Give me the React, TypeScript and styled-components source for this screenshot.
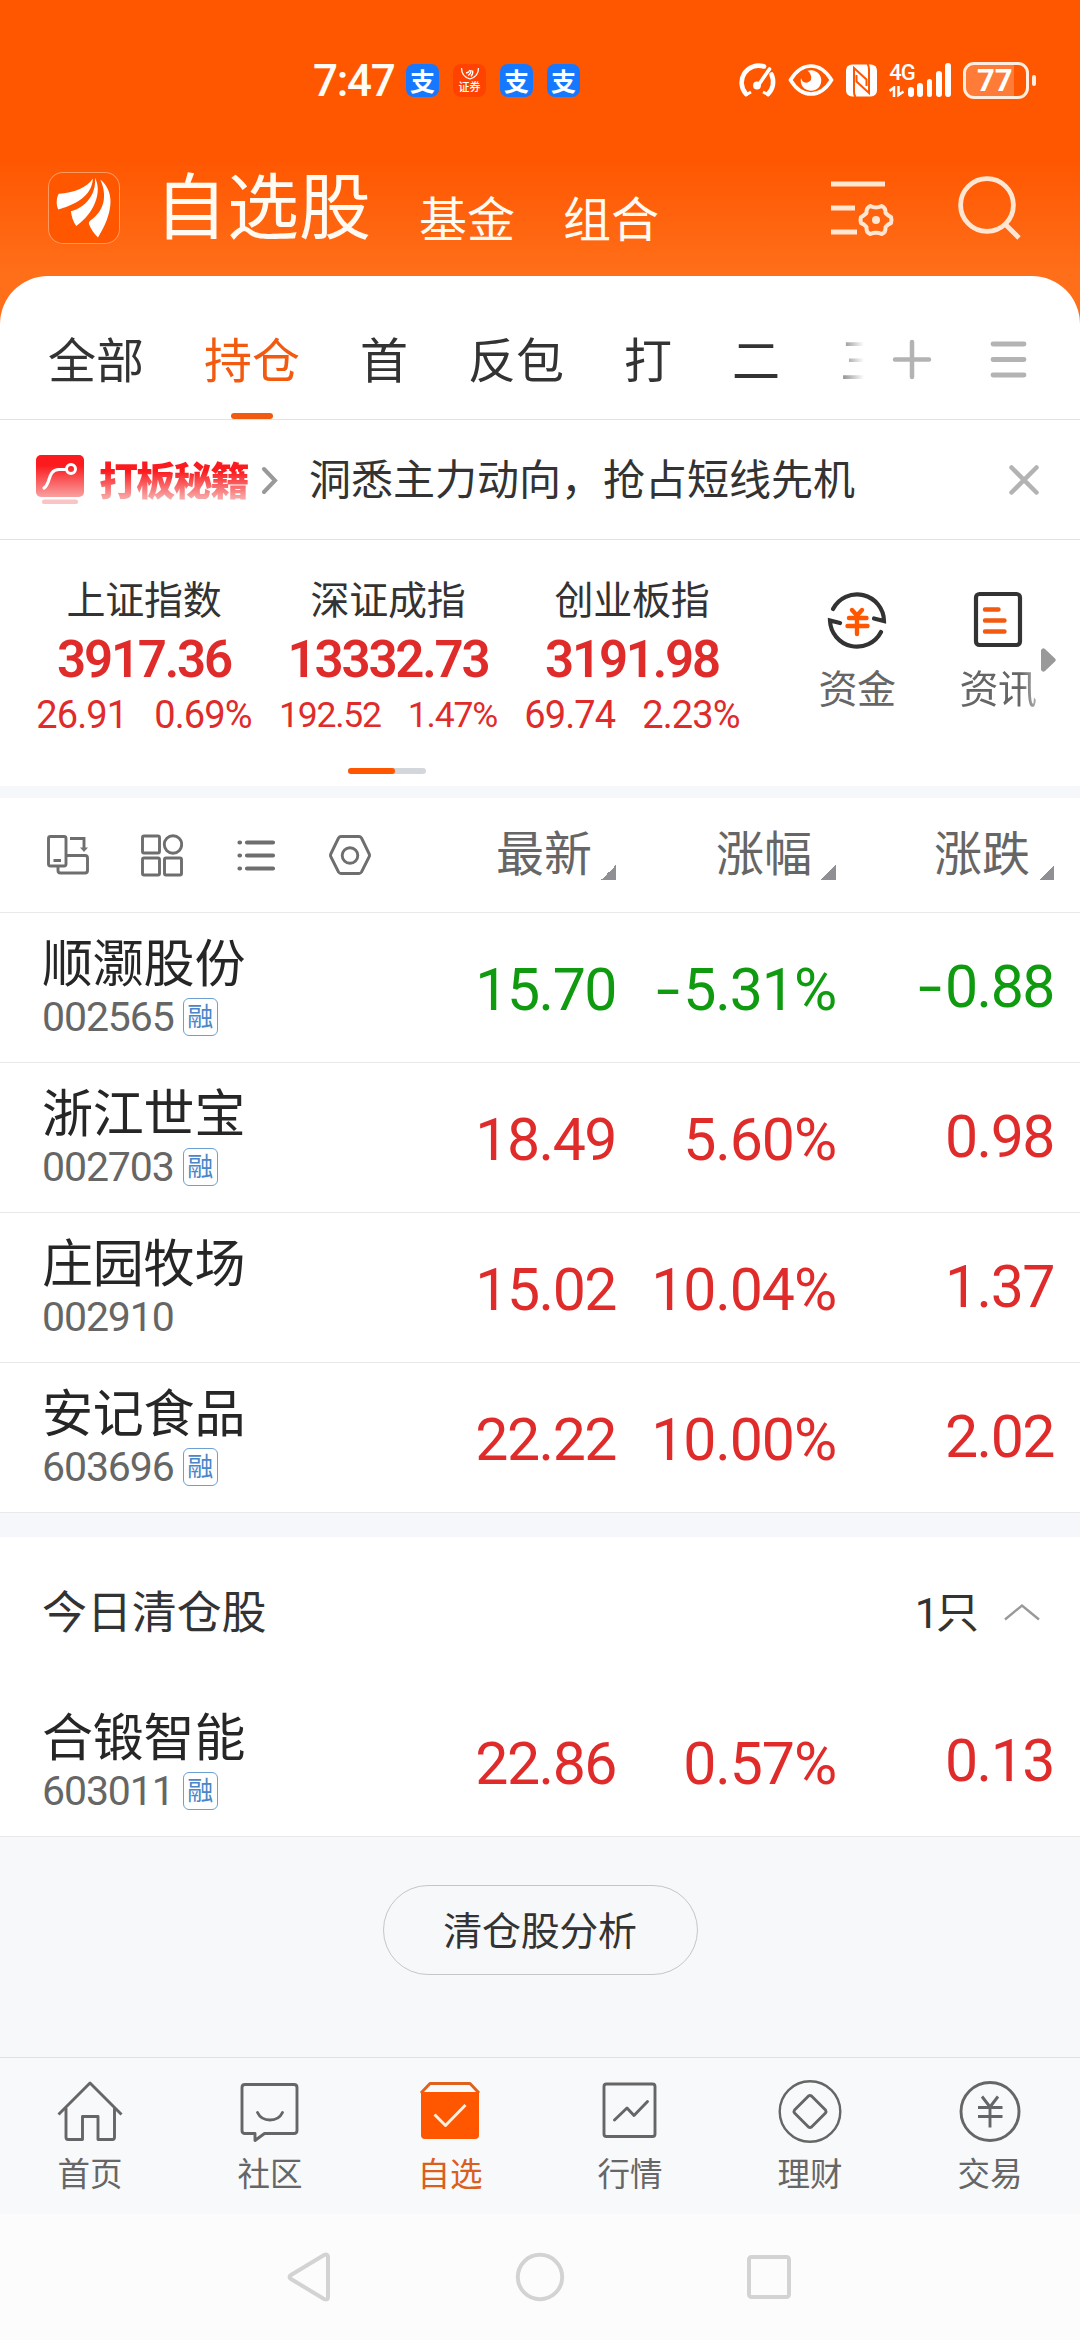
import React from 'react';
import styled, { createGlobalStyle } from 'styled-components';

const CJK = `"Noto Sans CJK SC", "Noto Sans", sans-serif`;
const NUM = `Roboto, "Noto Sans CJK SC", sans-serif`;
const RED = '#e02b2b';
const GREEN = '#0f9a0f';
const ORANGE = '#ff5600';

const GlobalStyle = createGlobalStyle`
  * { box-sizing: border-box; }
  html, body { margin: 0; padding: 0; background: #fcfcfc; }
  body { font-family: ${CJK}; color: #333; }
  svg { display: block; flex: none; }
`;

const Screen = styled.div`
  width: 1080px;
  height: 2340px;
  display: flex;
  flex-direction: column;
  overflow: hidden;
  background: #f7f8fa;
`;

/* ---------- status bar + header ---------- */

const Top = styled.div`
  flex: none;
  height: 324px;
  margin-bottom: -48px;
  background: linear-gradient(180deg, #ff5600 0, #ff5600 155px, #ff6f1a 276px, #ff6f1a 324px);
`;

const StatusBar = styled.div`
  height: 160px;
  padding: 0 44px 0 313px;
  display: flex;
  align-items: center;
  justify-content: space-between;
`;

const StatusGroup = styled.div`
  display: flex;
  align-items: center;
`;

const Clock = styled.span`
  width: 93px;
  padding-top: 2px;
  font: 500 44px/48px ${NUM};
  letter-spacing: -1.3px;
  color: #fffbf5;
  white-space: nowrap;
`;

const AppBadge = styled.span<{ $bg: string }>`
  width: 33px;
  height: 33px;
  margin-right: 14px;
  border-radius: 8px;
  background: ${(p) => p.$bg};
  color: #fff;
  font: 700 25px/28px ${CJK};
  display: flex;
  flex-direction: column;
  align-items: center;
  justify-content: center;
`;

const BadgeCaption = styled.span`
  font: 500 11px/13px ${CJK};
  white-space: nowrap;
`;

const SignalColumn = styled.div`
  width: 19px;
  height: 33px;
  margin-left: 12px;
  display: flex;
  flex-direction: column;
  justify-content: space-between;
`;

const SignalType = styled.span`
  font: 500 22px/17px ${NUM};
  letter-spacing: -1px;
  color: #fff;
`;

const SignalBars = styled.div`
  display: flex;
  align-items: flex-end;
  gap: 3.6px;
  height: 34px;
`;

const SignalBar = styled.span<{ $h: number }>`
  width: 5.7px;
  height: ${(p) => p.$h}px;
  border-radius: 3px;
  background: #fff;
`;

const Battery = styled.div`
  width: 66px;
  height: 37px;
  margin-left: 12px;
  border: 3px solid #ffeee0;
  border-radius: 11px;
  background: linear-gradient(90deg, rgba(255, 255, 255, 0.22) 48px, transparent 48px);
  font: 700 31px/31px ${NUM};
  color: #fff;
  padding-left: 11px;
`;

const BatteryNub = styled.span`
  width: 4px;
  height: 11px;
  margin-left: 3px;
  border-radius: 2px;
  background: #ffeee0;
`;

const Header = styled.div`
  height: 116px;
  padding: 0 58px 0 48px;
  display: flex;
  align-items: flex-start;
  color: #fffaf2;
`;

const Logo = styled.div`
  width: 72px;
  height: 72px;
  margin-top: 12px;
  border: 1.5px solid rgba(255, 200, 160, 0.6);
  border-radius: 15px;
  background: #ff5600;
`;

const Title = styled.h1`
  margin: 6px 0 0 35px;
  font: 400 72px/72px ${CJK};
`;

const HeaderLink = styled.span`
  margin: 32px 0 0 48px;
  font: 400 48px/48px ${CJK};
`;

const HeaderActions = styled.div`
  margin: 15px 0 0 auto;
  display: flex;
  gap: 63px;
`;

/* ---------- group tabs ---------- */

const Sheet = styled.div`
  flex: none;
  background: #fff;
  border-radius: 48px 48px 0 0;
`;

const TabBar = styled.div`
  height: 144px;
  border-bottom: 1px solid #e2e2e2;
  display: flex;
  align-items: stretch;
`;

const TabScroller = styled.div`
  width: 866px;
  padding-left: 48px;
  display: flex;
  gap: 60px;
  overflow: hidden;
  mask-image: linear-gradient(90deg, #000 790px, rgba(0, 0, 0, 0.55) 842px, transparent 864px);
`;

const Tab = styled.div<{ $active?: boolean }>`
  flex: none;
  display: flex;
  flex-direction: column;
  align-items: center;
  justify-content: space-between;
  padding-top: 57px;
  font: 400 48px/48px ${CJK};
  color: ${(p) => (p.$active ? '#f25a10' : '#333')};
  &::after {
    content: '';
    width: 42px;
    height: 6px;
    border-radius: 3px;
    background: ${(p) => (p.$active ? '#f25a10' : 'transparent')};
  }
`;

const TabActions = styled.div`
  flex: 1;
  display: flex;
  align-items: flex-start;
  padding: 62px 0 0 26px;
  gap: 56px;
`;

/* ---------- promo banner ---------- */

const Banner = styled.div`
  height: 120px;
  padding: 0 40px 0 36px;
  border-bottom: 1px solid #e2e2e2;
  display: flex;
  align-items: center;
`;

const BannerTag = styled.span`
  width: 150px;
  margin: -4px 13px 0 15px;
  font: 900 39px/46px ${CJK};
  letter-spacing: -1.8px;
  white-space: nowrap;
  color: transparent;
  background: linear-gradient(180deg, #fb1a1e 35%, #f8a4a4 92%);
  background-clip: text;
  -webkit-background-clip: text;
`;

const BannerText = styled.span`
  flex: 1;
  margin: -6px 0 0 31px;
  font: 400 42px/48px ${CJK};
`;

/* ---------- indices ---------- */

const Indices = styled.div`
  height: 246px;
  padding: 37px 0 0 22px;
  display: grid;
  grid-template-columns: 732px 1fr;
  align-content: start;
`;

const IndexList = styled.div`
  display: grid;
  grid-template-columns: repeat(3, 244px);
`;

const IndexCard = styled.div`
  display: flex;
  flex-direction: column;
  align-items: center;
`;

const IndexName = styled.span`
  font: 400 39px/40px ${CJK};
  letter-spacing: -0.3px;
`;

const IndexValue = styled.span`
  margin-top: 16px;
  font: 600 51px/54px ${NUM};
  letter-spacing: -2.2px;
  color: ${RED};
`;

const IndexDelta = styled.div<{ $small?: boolean }>`
  width: 100%;
  margin-top: 6px;
  display: flex;
  justify-content: center;
  gap: 27px;
  font: 400 ${(p) => (p.$small ? 35.5 : 38)}px/44px ${NUM};
  letter-spacing: ${(p) => (p.$small ? -1.2 : -0.9)}px;
  color: ${RED};
`;

const Pager = styled.div`
  width: 78px;
  height: 6px;
  margin: 31px 0 0 326px;
  border-radius: 3px;
  background: #d3d7db;
`;

const PagerThumb = styled.div`
  width: 47px;
  height: 6px;
  border-radius: 3px;
  background: ${ORANGE};
`;

const Shortcuts = styled.div`
  padding: 13px 0 0 64px;
  display: flex;
`;

const Shortcut = styled.div<{ $faded?: boolean }>`
  width: ${(p) => (p.$faded ? 78 : 141)}px;
  padding-right: ${(p) => (p.$faded ? 0 : 63)}px;
  display: flex;
  flex-direction: column;
  align-items: center;
  gap: 14px;
  font: 400 39px/44px ${CJK};
  letter-spacing: -0.5px;
  white-space: nowrap;
  color: #666;
  ${(p) => p.$faded && 'mask-image: linear-gradient(90deg, #000 62px, rgba(0,0,0,.45) 80px);'}
`;

const MoreArrow = styled.div`
  padding: 57px 0 0 4px;
`;

/* ---------- stock table ---------- */

const Gap = styled.div<{ $h: number }>`
  flex: none;
  height: ${(p) => p.$h}px;
  background: #f6f7fa;
`;

const Grid = styled.div`
  flex: none;
  display: grid;
  grid-template-columns: 354px 220px 220px 218px;
  padding-left: 42px;
  background: #fff;
  border-bottom: 1px solid #e9e9eb;
`;

const TableHead = styled(Grid)`
  height: 115px;
`;

const Tools = styled.div`
  padding-top: 36px;
  display: flex;
  gap: 52px;
  padding-left: 5px;
`;

const SortHead = styled.div`
  display: flex;
  justify-content: flex-end;
  align-items: flex-start;
  gap: 9px;
  padding-top: 28px;
  font: 400 48px/48px ${CJK};
  color: #666;
`;

const SortMark = styled.span`
  width: 15px;
  height: 15px;
  margin-top: 39px;
  background: linear-gradient(135deg, transparent 50%, #8f8f94 50%);
`;

const Row = styled(Grid)`
  height: 150px;
`;

const Stock = styled.div`
  padding-top: 20px;
`;

const StockName = styled.div`
  font: 400 51px/54px ${CJK};
  letter-spacing: -0.2px;
  color: #262626;
`;

const StockCode = styled.div`
  margin-top: 10px;
  height: 40px;
  display: flex;
  align-items: center;
  font: 400 41px/40px ${NUM};
  letter-spacing: -1.1px;
  color: #666;
`;

const MarginBadge = styled.span`
  width: 35px;
  height: 38px;
  margin-left: 9px;
  border: 1.5px solid #6c9fd2;
  border-radius: 6px;
  font: 400 26px/31px ${CJK};
  letter-spacing: 0;
  text-align: center;
  color: #4a86c8;
`;

const Figure = styled.div<{ $color: string; $raised?: boolean; $track?: number }>`
  text-align: right;
  padding-top: ${(p) => (p.$raised ? 41 : 44)}px;
  font: 400 59px/66px ${NUM};
  letter-spacing: ${(p) => p.$track ?? -1.5}px;
  white-space: nowrap;
  color: ${(p) => p.$color};
`;

const Minus = styled.span`
  display: inline-block;
  margin-right: 5px;
  transform: scaleX(1.45);
  transform-origin: right center;
`;

const ClearedHead = styled.div`
  flex: none;
  height: 150px;
  padding: 0 40px 0 42px;
  background: #fff;
  display: flex;
  align-items: center;
  font: 400 45px/50px ${CJK};
`;

const ClearedTitle = styled.span`
  flex: 1;
  margin-top: -4px;
  letter-spacing: -0.1px;
`;

const ClearedCount = styled.span`
  margin: 2px 28px 0 0;
  font: 400 43px/50px ${NUM};
  letter-spacing: -3px;
`;

const Filler = styled.div`
  flex: 1;
  padding-top: 48px;
  display: flex;
  justify-content: center;
  align-items: flex-start;
`;

const PillButton = styled.button`
  width: 315px;
  height: 90px;
  padding: 0 0 5px;
  border: 1px solid #c4c6ca;
  border-radius: 45px;
  background: transparent;
  font: 400 39px/44px ${CJK};
  letter-spacing: -0.3px;
  color: #333;
`;

/* ---------- bottom navigation ---------- */

const NavBar = styled.div`
  flex: none;
  height: 157px;
  border-top: 1px solid #e0e1e3;
  background: #f8f9fb;
  display: grid;
  grid-template-columns: repeat(6, 1fr);
`;

const NavItem = styled.div<{ $active?: boolean }>`
  padding-top: 20px;
  display: flex;
  flex-direction: column;
  align-items: center;
  gap: 10px;
  font: 400 32.5px/36px ${CJK};
  color: ${(p) => (p.$active ? '#d95f1e' : '#666')};
`;

const SystemNav = styled.div`
  flex: none;
  height: 126px;
  background: #fcfcfc;
  display: flex;
  justify-content: center;
  align-items: center;
  gap: 180px;
`;

const Spacer = styled.span<{ $w: number }>`
  width: ${(p) => p.$w}px;
`;

/* ---------- icons ---------- */

const LogoMark = () => (
  <svg width="69" height="69" viewBox="1.5 1.5 69 69" fill="#fff">
    <path d="M45.3 7C45 21 33 32 10.800 38C8.500 34 8.800 26 11.300 22.300C26 21.500 40 16 45.300 7Z" />
    <path d="M47.500 6.300C55 20 47 42 28.700 54.500C25.500 50 24 45 23.400 39.800C38 36 49 23 47.500 6.300Z" />
    <path d="M52.800 8C60 14 63 22 63 30C63 43 56.500 56 50.500 66C46.500 62 43.500 57.500 41.400 52.500C41.200 50.500 42 49.500 43.500 48.500C57 39 60 24 52.800 8Z" />
  </svg>
);

const BrokerMark = () => (
  <svg width="20" height="12" viewBox="0 0 20 12" fill="none" stroke="#fff" strokeWidth="1.300">
    <path d="M1.500 0C1.500 6 5 9.500 10 11C15 9.500 18.500 6 18.500 0" />
    <path d="M6 5Q9 4.500 10 2M8 7.500Q11 6 11 2M11 8.500Q13.500 5.500 12.500 2.500" />
  </svg>
);

const GaugeIcon = () => (
  <svg width="40" height="36" viewBox="0 0 40 36" fill="none" stroke="#fff" strokeWidth="4.600">
    <path d="M9 32A17 17 0 0 1 27 4.500" strokeLinecap="round" />
    <path d="M34.500 12.500A17 17 0 0 1 31 32" strokeLinecap="round" />
    <path d="M6 27L9.500 32.500L14 30M34 27L31 32.500L26 30" strokeWidth="3" />
    <path d="M32.500 7L21.500 23" strokeWidth="3.600" strokeLinecap="round" />
    <circle cx="20" cy="23.500" r="3.900" fill="#fff" stroke="none" />
  </svg>
);

const EyeIcon = () => (
  <svg width="46" height="32" viewBox="0 0 46 32">
    <path d="M2.500 16Q11 2 23 2T43.500 16Q35 30 23 30T2.500 16Z" fill="none" stroke="#fff" strokeWidth="3.600" />
    <path d="M19.500 6.800A10.300 10.300 0 1 1 13 14Q14.500 19.500 19.500 18.500Q25 16.500 22.500 10.500Q21.500 8 19.500 6.800Z" fill="#fff" />
  </svg>
);

const NfcIcon = () => (
  <svg width="31" height="33" viewBox="0 0 31 33">
    <rect y="0.500" width="31" height="32" rx="6" fill="#fff" />
    <path d="M9.500 33Q8 31 8 28V4L20.500 15.500V22M21.500 0Q23 2 23 5V29L10.500 17.500V11" fill="none" stroke={ORANGE} strokeWidth="2" />
  </svg>
);

const DataArrows = () => (
  <svg width="15" height="11" viewBox="0 0 15 11" fill="none" stroke="#fff" strokeWidth="2.500">
    <path d="M0.500 5L5 1.500V11M9.500 0V9L14.500 5.500" />
  </svg>
);

const ListSettingsIcon = () => (
  <svg width="64" height="66" viewBox="0 0 64 66" fill="none" stroke="#ffe6d2" strokeWidth="5">
    <path d="M0 9H54M0 33H24M0 57H26" />
    <path
      d="M39.300 31Q45 34 50.700 31Q55 33 54.500 38Q57 40.500 60 42Q61 45 60 48Q57 49 54.500 52Q55 57.500 50.700 59Q45 56.500 39.300 59Q35 57.500 35.500 52Q33 49 30 48Q29 45 30 42Q33 40.500 35.500 38Q35 33 39.300 31Z"
      strokeWidth="4"
      strokeLinejoin="round"
    />
    <circle cx="45" cy="45" r="4" fill="#ffe6d2" stroke="none" />
  </svg>
);

const SearchIcon = () => (
  <svg width="64" height="66" viewBox="0 0 64 66" fill="none" stroke="#ffe6d2" strokeWidth="4.800">
    <circle cx="29" cy="30" r="26.400" />
    <path d="M47.500 49.500L61 63" />
  </svg>
);

const PlusIcon = () => (
  <svg width="40" height="44" viewBox="0 0 40 44" stroke="#b3b3b3" strokeWidth="4.500" strokeLinecap="round">
    <path d="M3 21.500H37M20 4V39" />
  </svg>
);

const MenuIcon = () => (
  <svg width="40" height="44" viewBox="0 0 40 44" stroke="#b3b3b3" strokeWidth="4.800" strokeLinecap="round">
    <path d="M5 6H36M5 21.500H36M5 37H36" />
  </svg>
);

const PromoIcon = () => (
  <svg width="48" height="50" viewBox="0 0 48 50" fill="none">
    <defs>
      <linearGradient id="promo" x1="0" y1="0" x2="0" y2="1">
        <stop offset="0.250" stopColor="#fb1a1e" />
        <stop offset="1" stopColor="#f9a0a0" />
      </linearGradient>
    </defs>
    <rect width="48" height="42" rx="5" fill="url(#promo)" />
    <rect x="6" y="44.500" width="36" height="4.500" rx="2" fill="#f8c4c4" />
    <path d="M8 33C15 29 11 15 23 14.500H30" stroke="#fff" strokeWidth="3.200" strokeLinecap="round" />
    <circle cx="35" cy="14" r="4.500" stroke="#fff" strokeWidth="3" />
  </svg>
);

const ChevronRight = () => (
  <svg width="16" height="28" viewBox="0 0 16 28" fill="none" stroke="#999" strokeWidth="4" strokeLinecap="round">
    <path d="M2 3L13 14.500L2 26" />
  </svg>
);

const CloseIcon = () => (
  <svg width="32" height="32" viewBox="0 0 32 32" stroke="#b3b3b3" strokeWidth="4.500" strokeLinecap="round">
    <path d="M3.500 3.500L28.500 28.500M28.500 3.500L3.500 28.500" />
  </svg>
);

const FundsIcon = () => (
  <svg width="60" height="60" viewBox="0 0 60 60" fill="none" stroke="#333" strokeWidth="4.200" strokeLinecap="round">
    <path d="M6 19A27 27 0 0 1 57 31L47 28.500" />
    <path d="M54 42A27 27 0 0 1 3 30.500L13 33" />
    <path d="M25 20L30 25.500L35 20M22 28H39.500M20.500 36H40.500M30 26V44" stroke={ORANGE} strokeWidth="4.400" />
  </svg>
);

const NewsIcon = () => (
  <svg width="60" height="60" viewBox="0 0 60 60" fill="none" strokeLinecap="round">
    <rect x="8" y="4" width="44" height="51" rx="3.500" stroke="#333" strokeWidth="4.200" />
    <path d="M17 19.500H30.500M17 30.500H36.500M17 41.500H36.500" stroke="#f25a10" strokeWidth="4.400" />
  </svg>
);

const toolPaths = [
  <g key="rotate">
    <rect x="1.500" y="2.500" width="17.500" height="29.500" rx="2" />
    <path d="M11 32V36.500Q11 39 13.500 39H38Q40.500 39 40.500 36.500V24Q40.500 21.500 38 21.500H19" />
    <path d="M6.500 26.500H14M23 4.500H37V14" />
    <path d="M33 13.500H41L37 18Z" fill="#737373" stroke="none" />
  </g>,
  <g key="grid">
    <rect x="1.500" y="2" width="17" height="17" rx="1.500" />
    <circle cx="32" cy="10.500" r="8.700" />
    <rect x="1.500" y="24" width="17" height="17" rx="1.500" />
    <rect x="23.500" y="24" width="17" height="17" rx="1.500" />
  </g>,
  <g key="list" strokeLinecap="round" strokeWidth="4.200">
    <path d="M12 8.500H38M12 21.500H38M12 34.500H38" />
    <path d="M4.500 8.500H5M4.500 21.500H5M4.500 34.500H5" />
  </g>,
  <g key="hex">
    <path d="M12 2.500H30Q31.500 2.500 32.500 4L40 19.500Q41 21.500 40 23L32.500 38Q31.500 39.500 30 39.500H12Q10.500 39.500 9.500 38L2 23Q1 21.500 2 19.500L9.500 4Q10.500 2.500 12 2.500Z" />
    <circle cx="21" cy="21.500" r="7.800" />
  </g>,
];

const NavIcon = ({ children }: { children: React.ReactNode }) => (
  <svg width="66" height="66" viewBox="0 0 66 66" fill="none" stroke="#666" strokeWidth="2.900" strokeLinejoin="round">
    {children}
  </svg>
);

/* ---------- data ---------- */

const tabs = ['全部', '持仓', '首', '反包', '打', '二', '三'];

const indices = [
  { name: '上证指数', value: '3917.36', delta: '26.91', pct: '0.69%' },
  { name: '深证成指', value: '13332.73', delta: '192.52', pct: '1.47%', small: true },
  { name: '创业板指', value: '3191.98', delta: '69.74', pct: '2.23%' },
];

type StockData = { name: string; code: string; margin?: boolean; last: string; pct: string; diff: string };

const stocks: StockData[] = [
  { name: '顺灏股份', code: '002565', margin: true, last: '15.70', pct: '-5.31%', diff: '-0.88' },
  { name: '浙江世宝', code: '002703', margin: true, last: '18.49', pct: '5.60%', diff: '0.98' },
  { name: '庄园牧场', code: '002910', last: '15.02', pct: '10.04%', diff: '1.37' },
  { name: '安记食品', code: '603696', margin: true, last: '22.22', pct: '10.00%', diff: '2.02' },
];

const cleared: StockData = { name: '合锻智能', code: '603011', margin: true, last: '22.86', pct: '0.57%', diff: '0.13' };

const navItems = [
  {
    label: '首页',
    icon: (
      <>
        <path d="M1.500 36.500L33 5L64.500 36.500" />
        <path d="M9 30V59Q9 61.500 11 61.500H25.500V38.500H41V61.500H55.500Q57.500 61.500 57.500 59V30" />
      </>
    ),
  },
  {
    label: '社区',
    icon: (
      <>
        <path d="M8 6.500H57Q60 6.500 60 9.500V52.500Q60 55.500 57 55.500H27.500L18 62.500V55.500H8Q5 55.500 5 52.500V9.500Q5 6.500 8 6.500Z" />
        <path d="M20.500 34.500Q24 42 33 42T45.500 34.500" strokeLinecap="round" />
      </>
    ),
  },
  {
    label: '自选',
    active: true,
    icon: (
      <>
        <path d="M4 15L13 5.500H53L62 15" stroke="#e0611c" />
        <path d="M4 14H62V57Q62 61 58 61H8Q4 61 4 57Z" fill={ORANGE} stroke="none" />
        <path d="M17.500 36.500L28.500 47.500L48.500 27" stroke="#fff0e0" />
      </>
    ),
  },
  {
    label: '行情',
    icon: (
      <>
        <rect x="7" y="6" width="51" height="52.500" rx="2.500" />
        <path d="M17.500 42L30 30L37 37.500L50.500 23.500" strokeLinecap="round" />
      </>
    ),
  },
  {
    label: '理财',
    icon: (
      <>
        <circle cx="33" cy="33.500" r="30.300" strokeWidth="2.400" />
        <path d="M31.500 18Q33 17 34.500 18L48.500 32Q49.500 33.500 48.500 35L34.500 49Q33 50 31.500 49L17.500 35Q16.500 33.500 17.500 32Z" />
      </>
    ),
  },
  {
    label: '交易',
    icon: (
      <>
        <circle cx="33" cy="33.500" r="29" />
        <path d="M25 18.500L33 29L41 18.500M21 29.500H45.500M21 38.500H45.500M33 29V49.500" />
      </>
    ),
  },
];

const Signed = ({ text }: { text: string }) =>
  text.startsWith('-') ? (
    <>
      <Minus>-</Minus>
      {text.slice(1)}
    </>
  ) : (
    <>{text}</>
  );

const StockRow = ({ s }: { s: StockData }) => {
  const color = s.diff.startsWith('-') ? GREEN : RED;
  return (
    <Row>
      <Stock>
        <StockName>{s.name}</StockName>
        <StockCode>
          {s.code}
          {s.margin && <MarginBadge>融</MarginBadge>}
        </StockCode>
      </Stock>
      <Figure $color={color}>{s.last}</Figure>
      <Figure $color={color} $track={-1.1}>
        <Signed text={s.pct} />
      </Figure>
      <Figure $color={color} $raised>
        <Signed text={s.diff} />
      </Figure>
    </Row>
  );
};

export default function App() {
  return (
    <Screen>
      <GlobalStyle />
      <Top>
        <StatusBar>
          <StatusGroup>
            <Clock>7:47</Clock>
            <AppBadge $bg="#1677ff">支</AppBadge>
            <AppBadge $bg="#ff4200">
              <BrokerMark />
              <BadgeCaption>证券</BadgeCaption>
            </AppBadge>
            <AppBadge $bg="#1677ff">支</AppBadge>
            <AppBadge $bg="#1677ff">支</AppBadge>
          </StatusGroup>
          <StatusGroup>
            <GaugeIcon />
            <Spacer $w={11} />
            <EyeIcon />
            <Spacer $w={12} />
            <NfcIcon />
            <SignalColumn>
              <SignalType>4G</SignalType>
              <DataArrows />
            </SignalColumn>
            <SignalBars>
              {[10, 14, 18, 26, 34].map((h) => (
                <SignalBar key={h} $h={h} />
              ))}
            </SignalBars>
            <Battery>77</Battery>
            <BatteryNub />
          </StatusGroup>
        </StatusBar>
        <Header>
          <Logo>
            <LogoMark />
          </Logo>
          <Title>自选股</Title>
          <HeaderLink>基金</HeaderLink>
          <HeaderLink>组合</HeaderLink>
          <HeaderActions>
            <ListSettingsIcon />
            <SearchIcon />
          </HeaderActions>
        </Header>
      </Top>

      <Sheet>
        <TabBar>
          <TabScroller>
            {tabs.map((t, i) => (
              <Tab key={t} $active={i === 1}>
                {t}
              </Tab>
            ))}
          </TabScroller>
          <TabActions>
            <PlusIcon />
            <MenuIcon />
          </TabActions>
        </TabBar>
        <Banner>
          <PromoIcon />
          <BannerTag>打板秘籍</BannerTag>
          <ChevronRight />
          <BannerText>洞悉主力动向，抢占短线先机</BannerText>
          <CloseIcon />
        </Banner>
        <Indices>
          <div>
            <IndexList>
              {indices.map((x) => (
                <IndexCard key={x.name}>
                  <IndexName>{x.name}</IndexName>
                  <IndexValue>{x.value}</IndexValue>
                  <IndexDelta $small={x.small}>
                    <span>{x.delta}</span>
                    <span>{x.pct}</span>
                  </IndexDelta>
                </IndexCard>
              ))}
            </IndexList>
            <Pager>
              <PagerThumb />
            </Pager>
          </div>
          <Shortcuts>
            <Shortcut>
              <FundsIcon />
              资金
            </Shortcut>
            <Shortcut $faded>
              <NewsIcon />
              资讯
            </Shortcut>
            <MoreArrow>
              <svg width="15" height="26" viewBox="0 0 15 26">
                <path d="M0 3Q2 0 4 2L14 11.500Q15.500 13 14 14.500L4 24Q2 26 0 23Z" fill="#999" />
              </svg>
            </MoreArrow>
          </Shortcuts>
        </Indices>
      </Sheet>

      <Gap $h={12} />
      <TableHead>
        <Tools>
          {toolPaths.map((p, i) => (
            <svg key={i} width="42" height="43" viewBox="0 0 42 43" fill="none" stroke="#6e6e6e" strokeWidth="2.900">
              {p}
            </svg>
          ))}
        </Tools>
        {['最新', '涨幅', '涨跌'].map((h) => (
          <SortHead key={h}>
            {h}
            <SortMark />
          </SortHead>
        ))}
      </TableHead>
      {stocks.map((s) => (
        <StockRow key={s.code} s={s} />
      ))}
      <Gap $h={24} />
      <ClearedHead>
        <ClearedTitle>今日清仓股</ClearedTitle>
        <ClearedCount>1只</ClearedCount>
        <svg width="36" height="18" viewBox="0 0 36 18" fill="none" stroke="#999" strokeWidth="2.400">
          <path d="M1 16.500L18 2.500L35 16.500" />
        </svg>
      </ClearedHead>
      <StockRow s={cleared} />
      <Filler>
        <PillButton>清仓股分析</PillButton>
      </Filler>

      <NavBar>
        {navItems.map((n) => (
          <NavItem key={n.label} $active={n.active}>
            <NavIcon>{n.icon}</NavIcon>
            {n.label}
          </NavItem>
        ))}
      </NavBar>
      <SystemNav>
        <svg width="50" height="50" viewBox="0 0 50 50" fill="none" stroke="#d3d3d3" strokeWidth="4">
          <path d="M39 3Q43 1.500 43 5V45Q43 48.500 39 47L6 27Q3 25 6 23Z" />
        </svg>
        <svg width="50" height="50" viewBox="0 0 50 50" fill="none" stroke="#d3d3d3" strokeWidth="4">
          <circle cx="25" cy="25" r="22.200" />
        </svg>
        <svg width="50" height="50" viewBox="0 0 50 50" fill="none" stroke="#d3d3d3" strokeWidth="4">
          <rect x="4" y="5" width="40" height="40" rx="2.500" />
        </svg>
      </SystemNav>
    </Screen>
  );
}
